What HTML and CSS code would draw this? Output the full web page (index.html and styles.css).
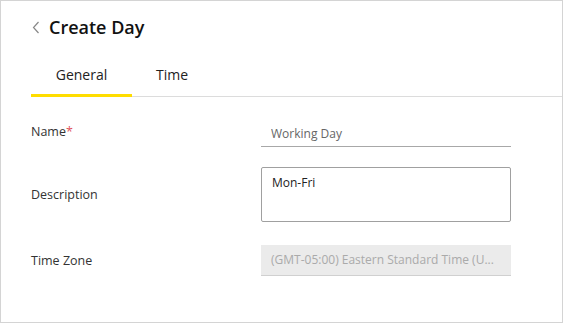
FILE: index.html
```html
<!DOCTYPE html>
<html>
<head>
<meta charset="utf-8">
<link rel="stylesheet" href="styles.css">
</head>
<body>
<div class="panel">
  <div class="header">
    <svg class="back" width="8" height="13" viewBox="0 0 8 13"><path d="M6.5 1 L1.5 6.5 L6.5 12" fill="none" stroke="#888" stroke-width="1.2"/></svg>
    <h1 class="title">Create Day</h1>
  </div>
  <div class="tabs">
    <div class="tab active">General</div>
    <div class="tab">Time</div>
  </div>
  <div class="form">
    <div class="row">
      <label class="label">Name<span class="req">*</span></label>
      <input class="input" type="text" value="Working Day">
    </div>
    <div class="row row-desc">
      <label class="label">Description</label>
      <textarea class="textarea">Mon-Fri</textarea>
    </div>
    <div class="row row-tz">
      <label class="label">Time Zone</label>
      <div class="select">(GMT-05:00) Eastern Standard Time (U...</div>
    </div>
  </div>
</div>
</body>
</html>
```

FILE: styles.css
```css
* { box-sizing: border-box; }
html, body { margin: 0; padding: 0; background: #fff; }
body { font-family: "Open Sans", "Noto Sans", sans-serif; color: #222; }
.panel {
  width: 563px;
  height: 323px;
  border: 1px solid #d4d4d4;
  background: #fff;
}
.header {
  display: flex;
  align-items: center;
  padding: 13px 0 0 31px;
  height: 38px;
}
.back { margin-right: 9px; margin-top: 1px; }
.title {
  margin: 0;
  font-size: 18px;
  font-weight: 600;
  line-height: 24px;
  color: #111;
}
.tabs {
  display: flex;
  margin: 22px 0 0 30px;
  border-bottom: 1px solid #dcdcdc;
}
.tab {
  padding: 4px 24px 9px 24px;
  font-size: 14px;
  line-height: 20px;
  color: #222;
  border-bottom: 3px solid transparent;
  margin-bottom: -1px;
}
.tab.active {
  border-bottom-color: #ffdd00;
  font-weight: 500;
  width: 101px;
  text-align: center;
  padding-left: 0;
  padding-right: 0;
}
.form {
  padding: 19px 0 0 30px;
  display: flex;
  flex-direction: column;
}
.row {
  display: grid;
  grid-template-columns: 230px 250px;
  align-items: center;
}
.row-desc { margin-top: 20px; }
.row-tz { margin-top: 23px; }
.label {
  font-size: 12.5px;
  color: #333;
  line-height: 18px;
}
.req { color: #e0525a; }
.input {
  height: 31px;
  border: none;
  border-bottom: 1px solid #a8a8a8;
  padding: 7px 10px 3px 10px;
  font-family: inherit;
  font-size: 12px;
  line-height: 20px;
  color: #666;
  outline: none;
  background: transparent;
}
.textarea {
  height: 55px;
  border: 1px solid #a0a0a0;
  border-radius: 2px;
  padding: 6px 10px;
  font-family: inherit;
  font-size: 12px;
  line-height: 18px;
  color: #222;
  resize: none;
  outline: none;
}
.select {
  height: 31px;
  background: #ebebeb;
  border-bottom: 1px solid #d0d0d0;
  padding: 0 10px;
  font-size: 12px;
  line-height: 30px;
  color: #aaa;
  white-space: nowrap;
  overflow: hidden;
}
```
